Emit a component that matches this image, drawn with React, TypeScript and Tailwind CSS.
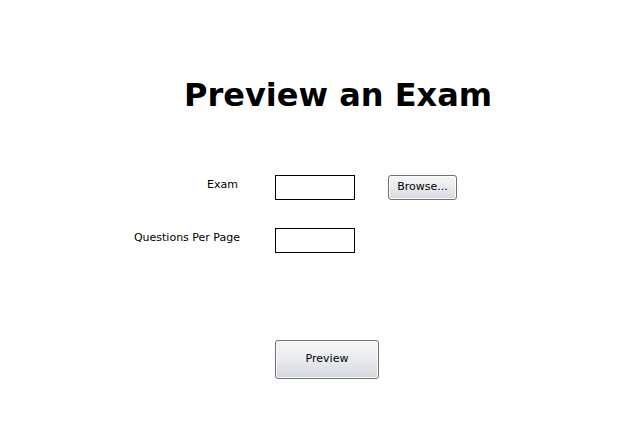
import React from "react"

const btn =
    "rounded-[3px] border border-[#707070] bg-gradient-to-b from-[#f6f6f6] via-[#e9ebee] to-[#d3d8de] text-black shadow-[inset_0_0_0_1px_#fcfcfc]"

const App: React.FC = () => {
    return (
        <div className="w-[644px] h-[441px] bg-white text-black font-['DejaVu_Sans',sans-serif]">
            {/* Title */}
            <h1 className="pt-[75px] pl-[184px] text-[32px] leading-[40px] font-bold font-['DejaVu_Sans',sans-serif]">
                Preview an Exam
            </h1>

            {/* Form rows */}
            <div className="mt-[60px] flex flex-col gap-[28px] text-[11px]">
                <div className="flex items-start h-[25px]">
                    <div className="w-[240px] pr-[2px] pt-[2px] text-right">Exam</div>
                    <input type="text" className="ml-[35px] w-[80px] h-[25px] border border-black bg-white outline-none" />
                    <button className={`ml-[33px] w-[69px] h-[25px] text-[11px] ${btn}`}>Browse...</button>
                </div>
                <div className="flex items-start h-[25px]">
                    <div className="w-[240px] pt-[2px] text-right">Questions Per Page</div>
                    <input type="text" className="ml-[35px] w-[80px] h-[25px] border border-black bg-white outline-none" />
                </div>
            </div>

            <div className="mt-[87px] pl-[275px]">
                <button className={`w-[104px] h-[39px] text-[11px] ${btn}`}>Preview</button>
            </div>
        </div>
    )
}

export default App
